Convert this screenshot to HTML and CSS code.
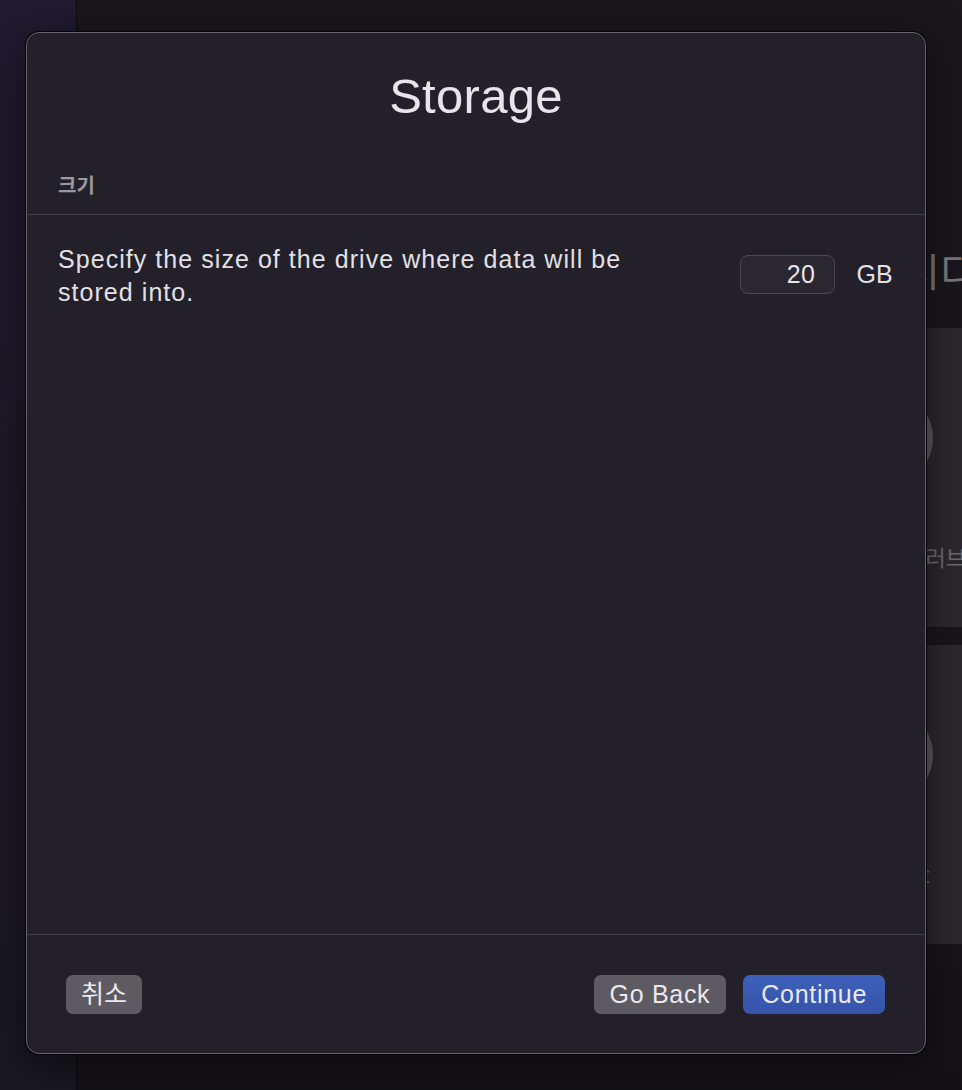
FILE: index.html
```html
<!DOCTYPE html>
<html lang="ko">
<head>
<meta charset="utf-8">
<title>Storage</title>
<link rel="stylesheet" href="styles.css">
</head>
<body>
<div class="app">
  <aside class="sidebar"></aside>
  <main class="main">
    <h2 class="page-title">시디</h2>
    <div class="card">
      <div class="card-icon"></div>
      <div class="card-label">템플러브</div>
    </div>
    <div class="card">
      <div class="card-icon"></div>
      <div class="card-label">Import</div>
    </div>
  </main>
</div>

<section class="dialog">
  <header class="dialog-header">
    <h1 class="dialog-title">Storage</h1>
  </header>
  <div class="section-label">크기</div>
  <div class="dialog-body">
    <p class="desc">Specify the size of the drive where data will be stored into.</p>
    <div class="size-field">
      <div class="size-input">20</div>
      <span class="unit">GB</span>
    </div>
  </div>
  <footer class="dialog-footer">
    <button class="btn btn-gray btn-cancel">취소</button>
    <div class="footer-right">
      <button class="btn btn-gray">Go Back</button>
      <button class="btn btn-blue">Continue</button>
    </div>
  </footer>
</section>
</body>
</html>
```
FILE: styles.css
```css
html, body {
  margin: 0;
  padding: 0;
  width: 962px;
  height: 1090px;
  overflow: hidden;
  background: #19171c;
  font-family: "Liberation Sans", "Noto Sans CJK KR", sans-serif;
}

.app {
  display: flex;
  height: 1090px;
  overflow: hidden;
}

.sidebar {
  width: 76px;
  flex: none;
  background: linear-gradient(180deg, #211a30 0%, #1d1826 45%, #1a1820 100%);
  border-right: 1px solid #0c0b0e;
}

.main {
  flex: 1;
  display: flex;
  flex-direction: column;
  gap: 18px;
  padding-left: 580px;
  overflow: hidden;
  background: linear-gradient(180deg, #19171c 0%, #18161b 80%, #141217 100%);
}

.page-title {
  margin: 250px 0 0 246px;
  height: 60px;
  font-size: 40px;
  font-weight: 400;
  line-height: 46px;
  color: #79777c;
  white-space: nowrap;
}

.card {
  width: 420px;
  height: 299px;
  flex: none;
  background: #2a282d;
  display: flex;
  flex-direction: column;
  align-items: flex-start;
  padding-left: 180px;
  box-sizing: border-box;
}

.card-icon {
  width: 96px;
  height: 96px;
  border-radius: 50%;
  background: #58565b;
  margin-top: 62px;
}

.card-label {
  margin-top: 60px;
  margin-left: 48px;
  font-size: 22px;
  line-height: 26px;
  color: #6b696e;
  white-space: nowrap;
}

.card + .card .card-label {
  margin-left: 30px;
}

/* Dialog sheet overlay */
.dialog {
  position: absolute;
  left: 26px;
  top: 32px;
  width: 900px;
  height: 1022px;
  box-sizing: border-box;
  background: #232029;
  border: 1px solid #66636b;
  border-radius: 13px;
  box-shadow: 0 0 0 1px #050407, 0 10px 40px rgba(0, 0, 0, 0.5);
  display: flex;
  flex-direction: column;
}

.dialog-header {
  padding-top: 34px;
  text-align: center;
}

.dialog-title {
  margin: 0;
  font-size: 49px;
  line-height: 59px;
  font-weight: 400;
  letter-spacing: 0.3px;
  color: #e7e5ea;
}

.section-label {
  margin-top: 48px;
  padding: 0 31px 15px;
  font-size: 20px;
  line-height: 25px;
  font-weight: 700;
  color: #9b98a0;
  border-bottom: 1px solid #403d46;
}

.dialog-body {
  flex: 1;
  display: flex;
  justify-content: space-between;
  align-items: flex-start;
  padding: 28px 32px 0 31px;
  border-bottom: 1px solid #403d46;
}

.desc {
  margin: 0;
  width: 610px;
  font-size: 25px;
  line-height: 33px;
  letter-spacing: 1.05px;
  color: #e2e0e5;
}

.size-field {
  display: flex;
  align-items: center;
  gap: 21px;
  margin-top: 12px;
}

.size-input {
  width: 95px;
  height: 39px;
  box-sizing: border-box;
  border: 1px solid #4a4750;
  border-radius: 8px;
  background: #2a2731;
  color: #e6e4e9;
  font-size: 25px;
  line-height: 37px;
  letter-spacing: 0.5px;
  text-align: right;
  padding-right: 19px;
}

.unit {
  font-size: 25px;
  letter-spacing: 0.2px;
  color: #e2e0e5;
}

.dialog-footer {
  display: flex;
  justify-content: space-between;
  align-items: center;
  padding: 40px 40px 39px 39px;
}

.footer-right {
  display: flex;
  gap: 17px;
}

.btn {
  height: 39px;
  padding: 0 16px;
  border: none;
  border-radius: 7px;
  font-family: "Liberation Sans", "Noto Sans CJK KR", sans-serif;
  font-size: 25px;
  line-height: 39px;
  letter-spacing: 0.7px;
  color: #ebe9ee;
}

.btn-cancel {
  padding: 0 15px;
  letter-spacing: 0;
}

.btn-gray {
  background: #5d5a61;
}

.btn-blue {
  background: linear-gradient(180deg, #3e60ba 0%, #3554aa 100%);
  padding: 0 18px;
}
```
